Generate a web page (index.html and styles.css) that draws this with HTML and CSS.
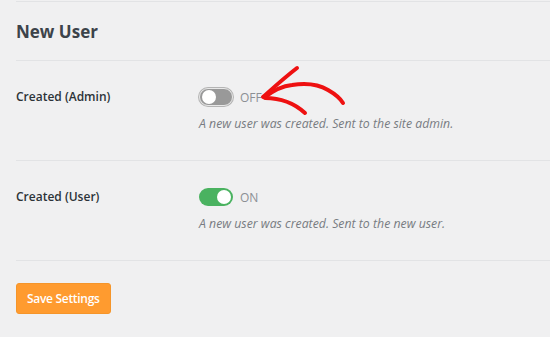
FILE: index.html
```html
<!DOCTYPE html>
<html>
<head>
  <meta charset="utf-8"/>
  <title>Email Settings</title>
  <link rel="stylesheet" href="styles.css">
</head>
<body>
  <div class="wrap">
    <!-- Section heading -->
    <div class="section-head">
      <h2 class="section-title">New User</h2>
    </div>

    <div class="setting-row">
      <div class="setting-label">Created (Admin)</div>
      <div class="setting-field">
        <div class="toggle-line">
          <span class="toggle toggle-off"><span class="knob"></span></span>
          <span class="toggle-state">OFF</span>
        </div>
        <p class="desc">A new user was created. Sent to the site admin.</p>
      </div>
    </div>

    <div class="setting-row">
      <div class="setting-label">Created (User)</div>
      <div class="setting-field">
        <div class="toggle-line">
          <span class="toggle toggle-on"><span class="knob"></span></span>
          <span class="toggle-state">ON</span>
        </div>
        <p class="desc">A new user was created. Sent to the new user.</p>
      </div>
    </div>

    <div class="actions">
      <button class="button-save">Save Settings</button>
    </div>
  </div>

  <!-- hand drawn annotation arrow -->
  <svg class="annotation" width="550" height="337" viewBox="0 0 550 337">
    <g fill="none" stroke="#ee1111" stroke-width="4" stroke-linecap="round" stroke-linejoin="round">
      <path d="M265 97 C 274 90, 283 86, 292 85 C 305 83, 318 84, 328 90 C 335 94, 340 98, 343 103"/>
      <path d="M263 97 C 272 89, 284 78, 297 68"/>
      <path d="M265 98 C 280 98, 294 103, 305 113"/>
    </g>
  </svg>
</body>
</html>
```

FILE: styles.css
```css
body {
  margin: 0;
  background: #f0f0f1;
  font-family: "Open Sans", "Noto Sans", sans-serif;
  color: #1d2327;
}

.wrap {
  padding-left: 16px;
  padding-top: 1px;
}

.section-head {
  border-top: 1px solid #e2e3e5;
  height: 58px;
  display: flex;
  align-items: center;
}
.section-title {
  margin: 0;
  font-size: 17px;
  font-weight: 700;
  color: #3c434a;
}

.setting-row {
  display: flex;
  border-top: 1px solid #e2e3e5;
  padding: 26px 0 27px;
}
.setting-label {
  width: 183px;
  font-size: 12px;
  font-weight: 600;
  line-height: 20px;
  color: #2c3338;
}

.toggle-line {
  display: flex;
  align-items: center;
  height: 20px;
}
.toggle {
  position: relative;
  width: 34px;
  height: 18px;
  border-radius: 9px;
  box-sizing: border-box;
}
.toggle .knob {
  position: absolute;
  top: 2px;
  width: 14px;
  height: 14px;
  border-radius: 50%;
  background: #fff;
}
.toggle-off {
  background: #999;
  border: 1px solid #e8e8e8;
  box-shadow: 0 0 0 1px #b4b4b4;
}
.toggle-off .knob {
  top: 1px;
  left: 2px;
}
.toggle-on {
  background: #4ab260;
}
.toggle-on .knob {
  right: 2px;
}
.toggle-state {
  margin-left: 7px;
  font-size: 12px;
  color: #8c8f94;
}

.desc {
  margin: 8px 0 0;
  font-size: 12.3px;
  line-height: 18px;
  font-style: italic;
  color: #787c82;
}

.actions {
  border-top: 1px solid #e2e3e5;
  padding-top: 22px;
}
.button-save {
  height: 31px;
  padding: 0 10px;
  border: 1px solid #f5952a;
  border-radius: 3px;
  background: #ff9b2f;
  color: #fff;
  font-family: inherit;
  font-size: 12px;
  font-weight: 600;
  letter-spacing: -0.3px;
  cursor: pointer;
}

.annotation {
  position: absolute;
  left: 0;
  top: 0;
  pointer-events: none;
}
```
